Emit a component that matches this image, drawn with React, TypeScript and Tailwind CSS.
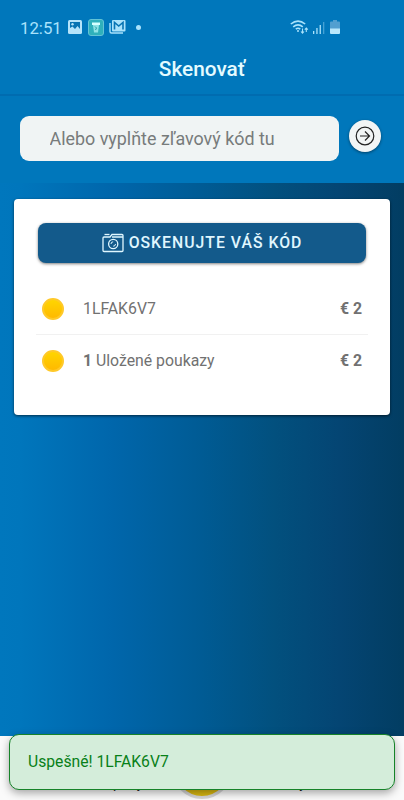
import React, { useState } from 'react';

const vouchers = [
    { id: 1, count: '', label: '1LFAK6V7', value: '€ 2' },
    { id: 2, count: '1', label: 'Uložené poukazy', value: '€ 2' },
];

const StatusBar = () => (
    <div className="flex h-[54px] items-center pl-5 text-[#a9e2fb]">
        <span className="w-[42px] pt-px text-[16.8px] leading-5 whitespace-nowrap">12:51</span>
        <svg className="ml-[6px]" width="14" height="14" viewBox="0 0 14 14">
            <rect width="14" height="14" rx="1.500" fill="#b5e4fa" />
            <path d="M2 2h10v7L9.500 6 7 9 4.500 6.500 2 8z" fill="#0874b3" />
            <circle cx="4.500" cy="4.300" r="1.200" fill="#b5e4fa" />
        </svg>
        <svg className="ml-[6px]" width="16" height="17" viewBox="0 0 16 17">
            <rect x=".5" y=".5" width="15" height="16" rx="2.500" fill="#2fb0bb" stroke="#62c3d6" />
            <path d="M4 3.500h8v2.500H4z" fill="#d5ffff" />
            <path d="M5 6h6l-1 7.500H6z" fill="#8fe3e6" />
            <path d="M7 7.500l1.500 1.500L7.500 11" stroke="#239ea7" fill="none" />
        </svg>
        <svg className="ml-[5px]" width="17" height="14" viewBox="0 0 17 14">
            <path d="M1 3v8.500Q1 13 2.500 13H14" stroke="#a9e2fb" strokeWidth="1.400" fill="none" />
            <rect x="3" width="13.500" height="11.500" rx="1" fill="#a9e2fb" />
            <path d="M5.500 9.500V2.500l4.250 3.500L14 2.500v7" stroke="#0874b3" strokeWidth="1.600" fill="none" />
        </svg>
        <span className="ml-[10px] size-[5px] rounded-full bg-[#a9e2fb]" />
        <svg className="ml-[149px]" width="19" height="15" viewBox="0 0 19 15" fill="none" stroke="#a9e2fb">
            <path d="M.8 4Q8 -1.800 15.200 4M3.200 6.800Q8 2.800 12.800 6.800M5.800 9.200Q8 7.400 10.300 9.200" strokeWidth="1.600" />
            <circle cx="8" cy="11" r="1" fill="#a9e2fb" stroke="none" />
            <path d="M12.500 8.500v4.500M11 11.500l1.500 1.700 1.500-1.700M16.300 12V8M14.800 9.700l1.500-1.700 1.500 1.700" strokeWidth="1.100" />
        </svg>
        <svg className="ml-[4px]" width="12" height="13" viewBox="0 0 12 13" fill="#a9e2fb">
            <path d="M0 10h1.300v3H0zM3.300 7h1.300v6H3.300zM6.600 4h1.300v9H6.600z" />
            <path d="M10 1h1.300v12H10z" fillOpacity=".4" />
        </svg>
        <svg className="ml-[5px]" width="10" height="14" viewBox="0 0 10 14">
            <path d="M3 0h4v1.500h2q1 0 1 1V9H0V2.500q0-1 1-1h2z" fill="#529fd0" />
            <path d="M0 8.500h10V13q0 1-1 1H1q-1 0-1-1z" fill="#b9e7fb" />
        </svg>
    </div>
);

const CameraIcon = () => (
    <svg width="22" height="20" viewBox="0 0 22 20" fill="none" stroke="#e0f7ff" strokeWidth="1.300">
        <path d="M2.500 1.500h5" />
        <path d="M2 4h6l2-2.500h10q1 0 1 1v15q0 1-1 1H2q-1 0-1-1V5q0-1 1-1zM10 4h11" />
        <circle cx="11.200" cy="11" r="4.600" />
        <path d="M9 11q0-2.200 2.200-2.200M13.500 11q0 2.200-2.300 2.200" strokeWidth="1" />
    </svg>
);

const App = () => {
    const [code, setCode] = useState('');

    return (
        <div className="relative flex h-[800px] w-[404px] flex-col overflow-hidden bg-[linear-gradient(90deg,#0077bd_0%,#0076bc_5%,#0066ab_28%,#005b94_50%,#02507e_68%,#044573_84%,#023d62_100%)] font-[Roboto,sans-serif]">
            <header className="h-[96px] shrink-0 border-b-2 border-[#006cb0] bg-[#0077bb]">
                <StatusBar />
                <h1 className="text-center text-[20.8px] leading-[30px] font-medium text-[#e4fbff]">Skenovať</h1>
            </header>

            <form className="flex h-[87px] shrink-0 bg-[#0077bb] pt-[20px] pl-5" onSubmit={(event) => event.preventDefault()}>
                <input
                    type="text"
                    value={code}
                    onChange={(event) => setCode(event.target.value)}
                    placeholder="Alebo vyplňte zľavový kód tu"
                    className="h-[45px] w-[319px] rounded-[9px] bg-[#f0f4f4] px-[29.5px] text-[17.9px] text-gray-700 outline-none placeholder:text-[#777b7b]"
                />
                <button type="submit" className="mt-[4px] ml-[10px] flex size-[32px] items-center justify-center rounded-full bg-[#f2f5f5] shadow-[0_1px_3px_rgba(0,0,0,0.45)]">
                    <svg width="20" height="20" viewBox="0 0 20 20" fill="none" stroke="#222" strokeWidth="1.200">
                        <circle cx="10" cy="10" r="8.800" />
                        <path d="M5 10h9.500M10 5.500l4.500 4.500-4.500 4.500" />
                    </svg>
                </button>
            </form>

            <main className="mx-[14px] mt-4 h-[216px] w-[376px] shrink-0 rounded-[4px] bg-white px-[22px] pt-6 shadow-[0_1px_3px_rgba(0,0,0,0.6)]">
                <button className="mx-[2px] flex h-[40px] w-[328px] items-center justify-center gap-[5px] rounded-[8px] bg-[#135a8b] text-[15.8px] font-medium tracking-[1.000px] text-[#e0f7ff] shadow-[0_1px_3px_rgba(0,0,0,0.5)]">
                    <CameraIcon />
                    <span>OSKENUJTE VÁŠ KÓD</span>
                </button>
                <ul className="mt-[20px]">
                    {vouchers.map((voucher) => (
                        <li key={voucher.id} className="flex h-[52px] items-center border-b border-[#f1f1f1] pr-[6px] pl-[6px] text-[15.8px] text-[#717171] last:border-transparent">
                            <span className="size-[22px] rounded-full border-2 border-[#ffc929] bg-linear-to-b from-[#ffd500] to-[#ffb900]" />
                            <span className="ml-[19px] grow">
                                {voucher.count && <b className="font-bold">{voucher.count} </b>}
                                {voucher.label}
                            </span>
                            <span className="font-bold">{voucher.value}</span>
                        </li>
                    ))}
                </ul>
            </main>

            {/* Bottom navigation */}
            <nav className="mt-auto grid h-[64px] shrink-0 grid-cols-[172px_60px_172px] bg-[#fafafa] text-center text-[14px] text-[#222]">
                <span className="mt-[39px] pl-[68px] leading-4">Kupóny</span>
                <span className="mt-[3px] size-[60px] rounded-full border-[3px] border-[#d5d5d5] bg-[#d9b810]" />
                <span className="mt-[39px] pr-[55px] leading-4">Ceny</span>
            </nav>

            {/* Success message, lies over the navigation */}
            <div className="absolute top-[734px] left-[9px] flex h-[56px] w-[386px] items-center rounded-[10px] border border-[#168329] bg-[#d4edda] pl-[18px] text-[15.7px] text-[#088018] shadow-[0_3px_8px_rgba(0,0,0,0.35)]">
                Uspešné! 1LFAK6V7
            </div>
        </div>
    );
};

export default App;
